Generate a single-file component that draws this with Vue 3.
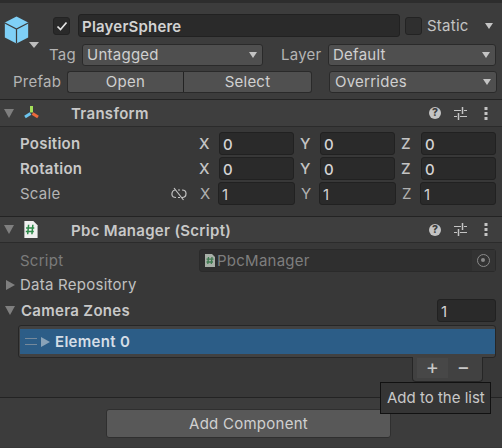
<script setup>
const rows = [
  { label: 'Position', bold: true, vals: ['0', '0', '0'] },
  { label: 'Rotation', bold: true, vals: ['0', '0', '0'] },
  { label: 'Scale', bold: false, link: true, vals: ['1', '1', '1'] },
]
const axes = ['X', 'Y', 'Z']
</script>

<template>
  <div class="inspector">
    <div class="strip"></div>

    <section class="head">
      <svg class="cube" width="25" height="28" viewBox="0 0 26 30">
        <path d="M13 .5 25.500 7V23L13 29.500.5 23V7Z" fill="#7fd0f7" />
        <path d="M.5 7.500 13 14 25.500 7.500M13 14V29.500" fill="none" stroke="#3c3c3c" stroke-width="1.300" />
      </svg>
      <span class="cube-caret"></span>

      <div class="name-row">
        <span class="check on">
          <svg width="12" height="10" viewBox="0 0 12 10"><path d="M1.500 5.500 4.500 8.500 10.500 1.500" fill="none" stroke="#e4e4e4" stroke-width="1.700" /></svg>
        </span>
        <div class="field name">PlayerSphere</div>
        <span class="check off"></span>
        <span class="static">Static</span>
        <span class="caret static-caret"></span>
      </div>

      <div class="tag-row">
        <span class="lbl tag-lbl">Tag</span>
        <div class="select tag-sel">Untagged<span class="caret"></span></div>
        <span class="lbl layer-lbl">Layer</span>
        <div class="select layer-sel">Default<span class="caret"></span></div>
      </div>

      <div class="prefab-row">
        <span class="lbl prefab-lbl">Prefab</span>
        <div class="btn-group">
          <div class="seg open">Open</div>
          <div class="seg sel">Select</div>
        </div>
        <div class="select over-sel">Overrides<span class="caret"></span></div>
      </div>
    </section>

    <header class="comp-head">
      <span class="fold down"></span>
      <svg class="comp-icon" width="17" height="17" viewBox="0 0 17 17">
        <path d="M8.500 1V7.500" stroke="#a5e05a" stroke-width="3" />
        <path d="M7.500 8.500 2 12" stroke="#6cc4ee" stroke-width="3" />
        <path d="M9.500 8.500 15 12" stroke="#ee6b3c" stroke-width="3" />
      </svg>
      <span class="comp-title">Transform</span>
      <div class="tools">
        <span class="help">?</span>
        <svg width="13" height="13" viewBox="0 0 13 13" class="sliders">
          <path d="M0 3.500H7M10 3.500H13M0 9.500H3M6 9.500H13" stroke="#c4c4c4" stroke-width="1.200" />
          <path d="M8.500 0V7M4.500 6V13" stroke="#c4c4c4" stroke-width="1.500" />
        </svg>
        <svg width="4" height="13" viewBox="0 0 4 13" class="dots">
          <rect x=".5" y="0" width="3" height="3" fill="#c4c4c4" />
          <rect x=".5" y="5" width="3" height="3" fill="#c4c4c4" />
          <rect x=".5" y="10" width="3" height="3" fill="#c4c4c4" />
        </svg>
      </div>
    </header>

    <section class="transform">
      <div v-for="r in rows" :key="r.label" class="t-row">
        <span class="t-label" :class="{ strong: r.bold }">{{ r.label }}</span>
        <svg v-if="r.link" class="unlink" width="16" height="14" viewBox="0 0 16 14">
          <path d="M5 3H4C1 3 .8 7 1 8c.3 2 2 2.500 4 2.500M11 3c2 0 4 .5 4 3.500S13 10.500 11 10.500M7 3H9M7 10.500H9M3 1 12.500 13" fill="none" stroke="#c4c4c4" stroke-width="1.200" />
        </svg>
        <div class="vec" :class="{ thin: !r.bold }">
          <template v-for="(v, i) in r.vals" :key="i">
            <span class="axis">{{ axes[i] }}</span>
            <div class="field num">{{ v }}</div>
          </template>
        </div>
      </div>
    </section>

    <header class="comp-head second">
      <span class="fold down"></span>
      <svg class="comp-icon doc" width="15" height="17" viewBox="0 0 15 18">
        <path d="M1 0H10.500L15 4.500V18H1Z" fill="#f0f0f0" />
        <path d="M5.500 4 4.500 14M10 4 9 14M2.800 7.300H11.500M2.500 11H11" stroke="#2f8a4a" stroke-width="1.600" fill="none" />
      </svg>
      <span class="comp-title">Pbc Manager (Script)</span>
      <div class="tools">
        <span class="help">?</span>
        <svg width="13" height="13" viewBox="0 0 13 13" class="sliders">
          <path d="M0 3.500H7M10 3.500H13M0 9.500H3M6 9.500H13" stroke="#c4c4c4" stroke-width="1.200" />
          <path d="M8.500 0V7M4.500 6V13" stroke="#c4c4c4" stroke-width="1.500" />
        </svg>
        <svg width="4" height="13" viewBox="0 0 4 13" class="dots">
          <rect x=".5" y="0" width="3" height="3" fill="#c4c4c4" />
          <rect x=".5" y="5" width="3" height="3" fill="#c4c4c4" />
          <rect x=".5" y="10" width="3" height="3" fill="#c4c4c4" />
        </svg>
      </div>
    </header>

    <section class="script">
      <div class="script-row">
        <span class="dim-label">Script</span>
        <div class="obj-field">
          <svg width="10" height="13" viewBox="0 0 10 13" class="mini-doc">
            <path d="M0 0H7L10 3V13H0Z" fill="#a8b0a8" />
            <path d="M3.500 3 2.800 10M7 3 6.300 10M1.500 5.200H8.500M1.500 8H8" stroke="#3f7a50" stroke-width="1.300" />
          </svg>
          <span>PbcManager</span>
          <span class="picker"><i></i></span>
        </div>
      </div>

      <div class="repo-row">
        <span class="fold right"></span>
        <span class="plain">Data Repository</span>
      </div>

      <div class="zones-row">
        <span class="fold down"></span>
        <span class="zones">Camera Zones</span>
        <div class="field count">1</div>
      </div>

      <div class="list">
        <div class="element">
          <span class="grip"></span>
          <span class="el-fold"></span>
          <span class="el-name">Element 0</span>
        </div>
      </div>
      <div class="list-foot">
        <span class="foot-btn hot">+</span>
        <span class="foot-btn">−</span>
      </div>
    </section>

    <section class="add">
      <div class="add-btn">Add Component</div>
    </section>

    <div class="tooltip">Add to the list</div>
  </div>
</template>

<style>
html, body { margin: 0; background: #383838; }
</style>

<style scoped>
.inspector {
  position: relative;
  width: 502px;
  height: 448px;
  overflow: hidden;
  background: #383838;
  color: #c4c4c4;
  font-family: Inter, "Liberation Sans", sans-serif;
  font-size: 15px;
  letter-spacing: .25px;
  line-height: 18px;
}
.strip { height: 3px; background: #2d2d2d; }

.head {
  position: relative;
  box-sizing: border-box;
  height: 97px;
  background: #3c3c3c;
  border-bottom: 1px solid #232323;
  padding-top: 11px;
}
.cube { position: absolute; left: 4px; top: 13px; }
.cube-caret {
  position: absolute; left: 29px; top: 39px;
  border-left: 5px solid transparent; border-right: 5px solid transparent;
  border-top: 6px solid #bdbdbd;
}
.name-row { display: flex; align-items: center; height: 23px; padding-left: 53px; }
.check {
  box-sizing: border-box; width: 17px; height: 18px; border-radius: 3px;
  background: #2a2a2a; border: 1px solid #232323;
  display: flex; align-items: center; justify-content: center;
}
.check.off { margin-left: 5px; background: #2f2f2f; }
.field {
  box-sizing: border-box;
  background: #2a2a2a; border: 1px solid #212121; border-radius: 3px;
}
.name {
  width: 322px; height: 23px; margin-left: 8px; padding-left: 3px;
  font-weight: 600; color: #d2d2d2; line-height: 23px; letter-spacing: .2px;
}
.static { margin-left: 5px; width: 58px; }
.caret {
  display: block;
  border-left: 4.500px solid transparent; border-right: 4.500px solid transparent;
  border-top: 6px solid #c4c4c4;
}
.static-caret { margin-left: 0; }

.tag-row { display: flex; align-items: center; height: 22px; margin-top: 7px; padding-left: 49px; }
.lbl { color: #b4b4b4; }
.tag-lbl { width: 33px; }
.select {
  box-sizing: border-box; height: 22px;
  display: flex; align-items: center; justify-content: space-between;
  background: #4f4f4f; border: 1px solid #2a2a2a; border-radius: 3px;
  padding: 0 5px 0 4px; color: #d0d0d0;
}
.tag-sel { width: 181px; }
.layer-lbl { margin-left: 18px; width: 47px; }
.layer-sel { width: 168px; }

.prefab-row { display: flex; align-items: center; height: 22px; margin-top: 5px; padding-left: 13px; }
.prefab-lbl { width: 54px; }
.btn-group { display: flex; width: 245px; height: 22px; }
.seg {
  box-sizing: border-box; height: 22px; background: #505050;
  border: 1px solid #2a2a2a;
  display: flex; align-items: center; justify-content: center; color: #d0d0d0;
}
.open { width: 117px; border-radius: 3px 0 0 3px; border-right-color: #232323; }
.sel { width: 128px; border-left: 0; border-radius: 0 3px 3px 0; }
.over-sel { width: 168px; margin-left: 17px; padding-left: 5px; }

.comp-head {
  box-sizing: border-box;
  position: relative;
  display: flex; align-items: center;
  height: 27px;
  background: #3e3e3e;
  border-bottom: 1px solid #2b2b2b;
}
.comp-head.second { height: 27px; border-top: 1px solid #232323; }
.fold { display: block; }
.fold.down {
  border-left: 5px solid transparent; border-right: 5px solid transparent;
  border-top: 9px solid #7f7f7f;
}
.fold.right {
  border-top: 5px solid transparent; border-bottom: 5px solid transparent;
  border-left: 9px solid #7f7f7f;
}
.comp-head .fold { margin-left: 4px; }
.comp-icon { margin-left: 9px; }
.doc { margin-left: 9px; }
.comp-title { position: absolute; left: 71px; top: 5px; font-weight: 600; color: #c8c8c8; letter-spacing: .3px; }
.tools { margin-left: auto; display: flex; align-items: center; padding-right: 14px; }
.help {
  width: 12px; height: 12px; border-radius: 50%; background: #c4c4c4; color: #3e3e3e;
  font-size: 10.500px; font-weight: 800; line-height: 12px; text-align: center; letter-spacing: 0;
}
.sliders { margin-left: 13px; }
.dots { margin-left: 17px; }

.transform { height: 89px; box-sizing: border-box; padding-top: 5px; }
.t-row { position: relative; display: flex; align-items: center; height: 23px; margin-bottom: 2px; padding-left: 20px; }
.t-label { color: #b4b4b4; }
.t-label.strong { font-weight: 600; color: #c8c8c8; }
.unlink { position: absolute; left: 171px; top: 5px; }
.vec { margin-left: auto; display: grid; grid-template-columns: 26px 75px 26px 75px 26px 75px; padding-right: 6px; align-items: center; }
.vec.thin { grid-template-columns: 24px 77px 24px 77px 24px 76px; }
.axis { padding-left: 6px; color: #c4c4c4; font-weight: 500; }
.vec.thin .axis { color: #b0b0b0; font-weight: 400; }
.num { height: 23px; padding-left: 3px; line-height: 23px; color: #d4d4d4; font-weight: 500; }
.vec.thin .num { font-weight: 400; }

.script { position: relative; height: 154px; box-sizing: border-box; padding-top: 6px; }
.script-row { display: flex; align-items: center; height: 23px; padding-left: 20px; }
.dim-label { color: #7b7b7b; }
.obj-field {
  box-sizing: border-box; position: absolute; left: 199px; top: 6px; width: 297px; height: 23px;
  display: flex; align-items: center; background: #2f2f2f; border: 1px solid #2a2a2a; border-radius: 3px;
  color: #7e7e7e; padding-left: 5px;
}
.mini-doc { margin-right: 2px; }
.picker {
  position: absolute; right: 0; top: 0; width: 23px; height: 21px;
  display: flex; align-items: center; justify-content: center; background: #333;
}
.picker i { box-sizing: border-box; width: 13px; height: 13px; border: 1.500px solid #8a8a8a; border-radius: 50%; position: relative; }
.picker i::after { content: ""; position: absolute; left: 3px; top: 3px; width: 4px; height: 4px; background: #8a8a8a; border-radius: 50%; }
.repo-row { display: flex; align-items: center; height: 18px; margin-top: 4px; padding-left: 6px; }
.plain { margin-left: 5px; color: #c0c0c0; }
.zones-row { position: relative; display: flex; align-items: center; height: 23px; margin-top: 5px; padding-left: 5px; }
.zones { margin-left: 6px; font-weight: 600; color: #c8c8c8; letter-spacing: .3px; }
.count { position: absolute; right: 6px; top: 0; width: 59px; height: 23px; padding-left: 3px; line-height: 23px; color: #d4d4d4; }
.list {
  box-sizing: border-box; margin: 3px 6px 0 18px; height: 33px; padding-top: 3px;
  background: #414141; border: 1px solid #262626; border-top-color: #262626; border-radius: 3px 3px 3px 3px;
}
.element {
  display: flex; align-items: center; height: 25px; margin-left: 1px;
  background: #2c5d87; color: #d4dde6;
}
.grip { display: block; width: 12px; height: 5px; margin-left: 5px; border-top: 1px solid #75899b; border-bottom: 1px solid #75899b; }
.el-fold {
  display: block; margin-left: 4px;
  border-top: 5px solid transparent; border-bottom: 5px solid transparent; border-left: 9px solid #8aa3b8;
}
.el-name { margin-left: 5px; font-weight: 600; letter-spacing: .3px; }
.list-foot {
  box-sizing: border-box; width: 71px; height: 25px; margin-left: 412px; margin-top: -1px;
  display: flex; padding: 1px 0 0 4px;
  background: #414141; border: 1px solid #262626; border-top: 0; border-radius: 0 0 4px 4px;
}
.foot-btn {
  width: 31px; height: 20px; text-align: center; font-size: 20px; line-height: 19px; color: #c8c8c8;
}
.foot-btn.hot { background: #474747; }

.add { box-sizing: border-box; height: 50px; border-top: 1px solid #232323; background: #3c3c3c; padding: 11px 0 0 106px; }
.add-btn {
  box-sizing: border-box; width: 285px; height: 29px; border-radius: 3px;
  background: #585858; border: 1px solid #2f2f2f;
  display: flex; align-items: center; justify-content: center; color: #d0d0d0;
}
.tooltip {
  position: absolute; left: 380px; top: 382px; box-sizing: border-box; width: 111px; height: 32px;
  background: #353535; border: 1px solid #111; letter-spacing: 0;
  padding-left: 6px; line-height: 30px; white-space: nowrap; color: #c8c8c8;
}
</style>
